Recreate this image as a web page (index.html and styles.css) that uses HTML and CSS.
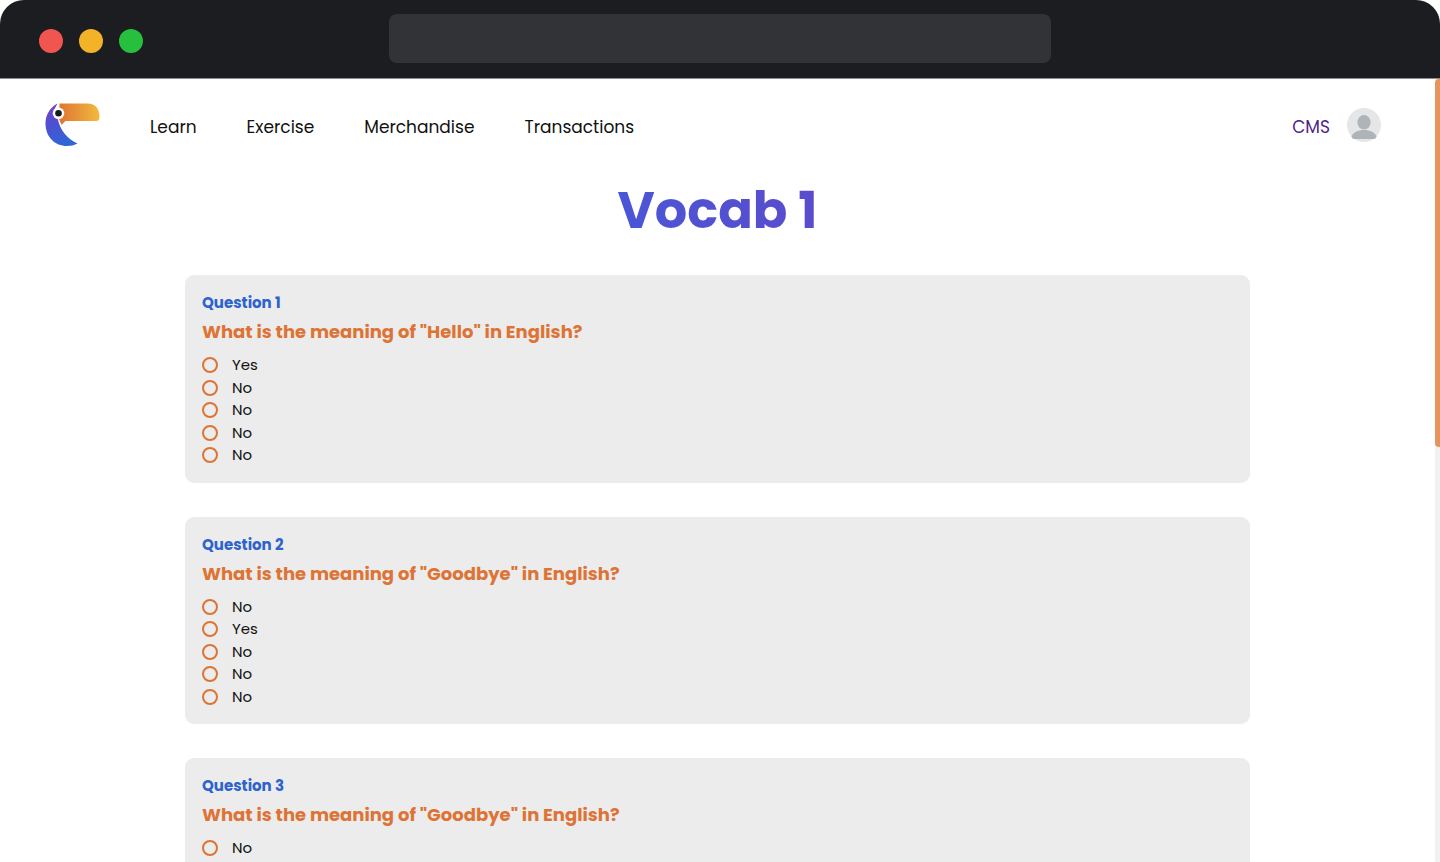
FILE: index.html
```html
<!DOCTYPE html>
<html lang="en">
<head>
<meta charset="utf-8">
<meta name="viewport" content="width=device-width, initial-scale=1">
<title>Vocab 1</title>
<link rel="stylesheet" href="styles.css">
</head>
<body>
<div class="window">
  <div class="titlebar">
    <div class="lights">
      <span class="light light-close"></span>
      <span class="light light-minimise"></span>
      <span class="light light-expand"></span>
    </div>
    <input class="address" type="text" aria-label="Address">
  </div>
  <div class="viewport">
    <div class="page">
      <header class="nav">
        <a class="logo" href="#" aria-label="Home">
          <svg width="56" height="44" viewBox="0 0 56 44" aria-hidden="true">
            <defs>
              <linearGradient id="body" x1="0" y1="0" x2="0.5" y2="1">
                <stop offset="0" stop-color="#7a3fc4"/>
                <stop offset="0.5" stop-color="#4b51d2"/>
                <stop offset="1" stop-color="#3066d4"/>
              </linearGradient>
              <linearGradient id="beak" x1="0" y1="0" x2="1" y2="0">
                <stop offset="0" stop-color="#df7435"/>
                <stop offset="1" stop-color="#f2ba3c"/>
              </linearGradient>
            </defs>
            <path fill="url(#body)" d="M12.500 0.500C4 5 0.500 13 0.500 20.500C0.500 34 10 43 22 43C26 43 29.500 42.200 32.500 40.500C22 36 15 27 12.500 15L8 9Z"/>
            <path fill="url(#beak)" d="M14.500 0.500H42C51 0.500 54.500 6 54.500 14C54.500 17 53.500 18 51 18H20.500L16.500 22L14 16Z"/>
            <circle cx="13.500" cy="10.300" r="5.800" fill="#fff"/>
            <circle cx="13.500" cy="10.300" r="3.300" fill="#17191c"/>
          </svg>
        </a>
        <nav class="links">
          <a href="#">Learn</a>
          <a href="#">Exercise</a>
          <a href="#">Merchandise</a>
          <a href="#">Transactions</a>
        </nav>
        <div class="account">
          <a class="cms" href="#">CMS</a>
          <a class="avatar" href="#" aria-label="Profile">
            <svg width="34" height="34" viewBox="0 0 34 34" aria-hidden="true">
              <circle cx="17" cy="17" r="17" fill="#e4e6e7"/>
              <ellipse cx="17" cy="14.300" rx="6.600" ry="7.200" fill="#aeb4b7"/>
              <path fill="#aeb4b7" d="M4.500 28.500C6 24.500 11 22 17 22S28 24.500 29.500 28.500Q29 31 26.500 31H7.500Q5 31 4.500 28.500Z"/>
            </svg>
          </a>
        </div>
      </header>
      <main class="quiz">
        <h1>Vocab 1</h1>
        <section class="card">
          <h2>Question 1</h2>
          <fieldset>
            <legend>What is the meaning of "Hello" in English?</legend>
            <label><input type="radio" name="q1">Yes</label>
            <label><input type="radio" name="q1">No</label>
            <label><input type="radio" name="q1">No</label>
            <label><input type="radio" name="q1">No</label>
            <label><input type="radio" name="q1">No</label>
          </fieldset>
        </section>
        <section class="card">
          <h2>Question 2</h2>
          <fieldset>
            <legend>What is the meaning of "Goodbye" in English?</legend>
            <label><input type="radio" name="q2">No</label>
            <label><input type="radio" name="q2">Yes</label>
            <label><input type="radio" name="q2">No</label>
            <label><input type="radio" name="q2">No</label>
            <label><input type="radio" name="q2">No</label>
          </fieldset>
        </section>
        <section class="card">
          <h2>Question 3</h2>
          <fieldset>
            <legend>What is the meaning of "Goodbye" in English?</legend>
            <label><input type="radio" name="q3">No</label>
          </fieldset>
        </section>
      </main>
    </div>
    <div class="scrollbar"><div class="thumb"></div></div>
  </div>
</div>
</body>
</html>
```
FILE: styles.css
```css
* { box-sizing: border-box; }
body {
  margin: 0;
  background: #fff;
  color: #111;
  font-family: Poppins, Inter, "Open Sans", sans-serif;
}
a { color: inherit; text-decoration: none; }
.window {
  display: flex;
  flex-direction: column;
  height: 100vh;
  overflow: hidden;
}
.titlebar {
  display: grid;
  grid-template-columns: 1fr 46% 1fr;
  align-items: center;
  flex: none;
  height: 79px;
  padding-bottom: 2px;
  background: #1c1d20;
  border-bottom: 1px solid #8c8d8e;
  border-radius: 24px 24px 0 0;
}
.lights { display: flex; gap: 16px; padding: 6px 0 0 39px; }
.light { width: 24px; height: 24px; border-radius: 50%; }
.light-close { background: #f0564f; }
.light-minimise { background: #f2b329; }
.light-expand { background: #26c03e; }
.address {
  width: 100%;
  height: 49px;
  padding: 0 16px;
  border: 0;
  border-radius: 8px;
  background: #323336;
  color: #fff;
  font: inherit;
}
.viewport { display: flex; flex: 1; min-height: 0; }
.page { flex: 1; overflow: hidden; }
.scrollbar { width: 5px; background: #f1f1f1; }
.thumb { height: 47%; background: #e6935c; border-radius: 4px 0 0 4px; }
.nav {
  display: flex;
  align-items: center;
  padding: 24px 54px 0 45px;
  font-size: 17px;
  line-height: 26px;
}
.logo, .avatar { display: flex; }
.links { display: flex; gap: 50px; padding: 4px 0 0 49px; }
.account { display: flex; align-items: center; gap: 17px; margin-left: auto; }
.cms { padding-top: 4px; color: #4b2388; }
.quiz {
  display: flex;
  flex-direction: column;
  gap: 34px;
  padding: 32px 185px 34px;
}
h1 {
  margin: 0;
  align-self: center;
  font-size: 51px;
  line-height: 62px;
  font-weight: 700;
  background: linear-gradient(90deg, #4a56d6, #5a4ccd);
  background-clip: text;
  color: transparent;
}
.card {
  padding: 16px 17px;
  border-radius: 9px;
  background: #ececec;
}
h2 {
  margin: 0;
  color: #2e62cc;
  font-size: 15px;
  line-height: 24px;
  font-weight: 700;
}
fieldset { min-width: 0; margin: 0; padding: 0; border: 0; }
legend {
  margin-bottom: 7px;
  padding: 2px 0 0;
  color: #dd7436;
  font-size: 18px;
  line-height: 30px;
  font-weight: 700;
}
label {
  display: flex;
  align-items: center;
  gap: 14px;
  font-size: 15px;
  line-height: 1.5;
}
input[type="radio"] {
  appearance: none;
  width: 16px;
  height: 16px;
  margin: 0;
  border: 2px solid #dd7436;
  border-radius: 50%;
}
input[type="radio"]:checked { background: #dd7436; box-shadow: inset 0 0 0 2px #ececec; }
```
